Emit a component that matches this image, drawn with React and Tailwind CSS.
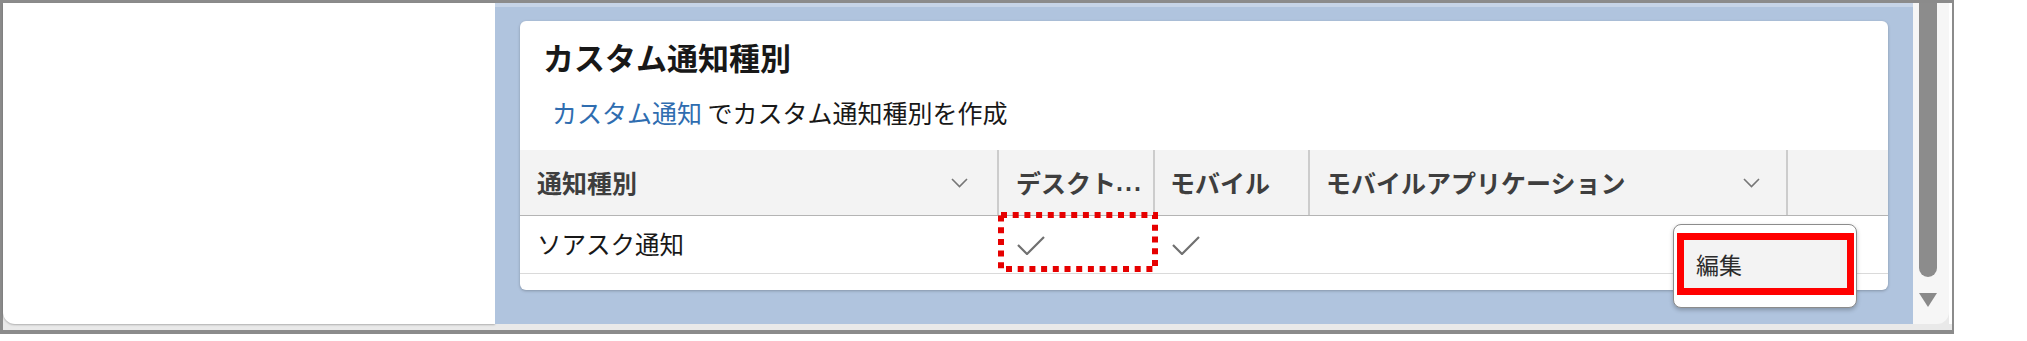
import React from 'react';

function Chevron() {
    return (
        <svg width="17" height="10" viewBox="0 0 17 10" fill="none" stroke="#767676" strokeWidth="1.6">
            <path d="M1 1l7.5 7.5L16 1" />
        </svg>
    );
}

function Check() {
    return (
        <svg width="28" height="20" viewBox="0 0 28 20" fill="none" stroke="#707070" strokeWidth="2.2">
            <path d="M1 10l9 9L27 2" />
        </svg>
    );
}

export default function App() {
    return (
        <div className="w-[2027px] h-[341px] bg-white font-['Noto_Sans_CJK_JP','Liberation_Sans',sans-serif]">
            {/* window frame */}
            <div className="w-[1954px] h-[334px] flex flex-col border-t-[3px] border-l-[3px] border-r-[2px] border-b-[4px] border-[#8b8b8b] bg-[#e9e9e9]">
                <div className="flex flex-1 min-h-0">
                    {/* left blank panel */}
                    <div className="w-[492px] bg-white rounded-bl-[12px] shadow-[0_1px_2px_rgba(0,0,0,0.25)]" />

                    {/* main blue area */}
                    <div className="flex-1 bg-[#b0c4de] flex flex-col">
                        <div className="h-[4px] bg-[#c6d4e7]" />

                        <div className="relative mt-[14px] mx-[25px] bg-white rounded-[6px] shadow-[0_1px_3px_rgba(0,0,0,0.25)] pt-[18px] pb-[16px]">
                            <h1 className="pl-[23px] text-[31px] leading-[36px] font-bold text-[#181818]">カスタム通知種別</h1>
                            <p className="mt-[22px] pl-[32px] text-[25px] leading-[30px] text-[#181818]">
                                <span className="text-[#2f6db0]">カスタム通知</span> でカスタム通知種別を作成
                            </p>

                            {/* table header */}
                            <div className="mt-[23px] grid grid-cols-[479px_156px_155px_478px_100px] h-[66px] bg-[#f3f3f3] border-b border-[#b4b4b4] text-[25px] font-bold text-[#3e3e3e]">
                                <div className="flex items-center justify-between pl-[17px] pr-[29px] border-r-2 border-[#cccccc]">
                                    <span>通知種別</span>
                                    <Chevron />
                                </div>
                                <div className="flex items-center pl-[17px] border-r-2 border-[#cccccc] whitespace-nowrap">
                                    <span>デスクト</span>
                                    <span className="font-['Liberation_Sans',sans-serif] tracking-[2px]">...</span>
                                </div>
                                <div className="flex items-center pl-[15px] border-r-2 border-[#cccccc] whitespace-nowrap">モバイル</div>
                                <div className="flex items-center justify-between pl-[16px] pr-[26px] border-r-2 border-[#cccccc] whitespace-nowrap">
                                    <span>モバイルアプリケーション</span>
                                    <Chevron />
                                </div>
                                <div />
                            </div>

                            {/* table row */}
                            <div className="grid grid-cols-[479px_156px_155px_478px_100px] h-[58px] border-b border-[#dadada] text-[24.5px] text-[#181818]">
                                <div className="flex items-center pl-[17px]">ソアスク通知</div>
                                <div className="flex items-center pl-[18px]"><Check /></div>
                                <div className="flex items-center pl-[17px]"><Check /></div>
                                <div />
                                <div />
                            </div>

                            {/* dotted highlight around desktop cell */}
                            <svg className="absolute left-[478px] top-[191px]" width="160" height="60" viewBox="0 0 160 60">
                                <rect x="3" y="3" width="154" height="54" fill="none" stroke="#e60000" strokeWidth="6" strokeDasharray="6 5.7" />
                            </svg>

                            {/* row action menu */}
                            <div className="absolute left-[1153px] top-[203px] w-[184px] h-[84px] bg-white border-[1.5px] border-[#8c8c8c] rounded-[8px] shadow-[0_2px_4px_rgba(0,0,0,0.25)] pt-[8px] pl-[3px] pr-[2px]">
                                <div className="h-[62px] border-[7px] border-[#ff0000] bg-[#f3f3f3] flex items-center pl-[12px] text-[23px] text-[#2b2b2b]">
                                    編集
                                </div>
                            </div>
                        </div>
                    </div>

                    {/* scrollbar */}
                    <div className="w-[36px] bg-[#f6f6f6] rounded-br-[12px] flex flex-col items-start pl-[6px]">
                        <div className="w-[18px] h-[274px] bg-[#8c8c8c] rounded-b-full" />
                        <svg className="mt-[16px]" width="18" height="14" viewBox="0 0 18 14">
                            <path d="M0 0h18L9 14z" fill="#8a8a8a" />
                        </svg>
                    </div>
                    <div className="w-[3px] bg-white" />
                </div>
                <div className="h-[6px]" />
            </div>
        </div>
    );
}
